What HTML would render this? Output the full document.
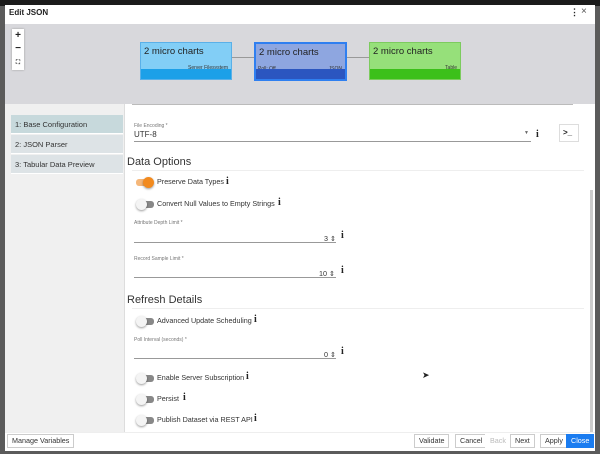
<!DOCTYPE html>
<html><head><style>
*{box-sizing:border-box;margin:0;padding:0}
body{width:600px;height:454px;background:#5b5b5b;font-family:"Liberation Sans",sans-serif;position:relative;overflow:hidden;color:#222}
.abs{position:absolute}
.top{left:0;top:0;width:600px;height:6px;background:#1b1b1b}
.dlg{left:5px;top:5px;width:590px;height:446px;background:#fff}
.node{position:absolute;border:1px solid;width:92px;height:38px}
.node .t{position:absolute;left:3px;top:3px;font-size:9.5px;color:#222}
.node .s{position:absolute;right:3px;top:22px;font-size:5px;color:#333}
.node .b{position:absolute;left:0;right:0;bottom:0;height:10px}
.nav div{position:absolute;left:11px;width:112px;height:19px;font-size:7.5px;padding:5px 4px;color:#333;background:#dde3e6;border-bottom:1px solid #fff}
.lbl{font-size:5px;color:#777}
.tog{position:absolute;width:15px;height:7px;border-radius:3px;background:#888}
.tog:after{content:"";position:absolute;left:-3px;top:-2px;width:11px;height:11px;border-radius:50%;background:#f4f4f4;box-shadow:0 1px 2px rgba(0,0,0,.4)}
.tog.on{background:#f5b77a}.tog.on:after{left:7px;background:#f28a1e}
.tx{position:absolute;font-size:7.2px;color:#333}
.i{position:absolute;font-family:"Liberation Serif",serif;font-weight:bold;font-size:10px;color:#222}
.line{position:absolute;height:1px;background:#999}
.btn{position:absolute;top:434px;height:14px;border:1px solid #ccc;font-size:7.2px;line-height:12px;padding:0 4px;color:#333;background:#fff}
h3{position:absolute;font-weight:normal;font-size:11px;color:#333}
</style></head><body>
<div class="abs top"></div>
<div class="abs dlg"></div>
<div class="abs" style="left:9px;top:8px;font-size:8px;font-weight:bold">Edit JSON</div>
<div class="abs" style="left:570px;top:7px;font-size:9px;font-weight:bold">⋮</div>
<div class="abs" style="left:581px;top:6px;font-size:10px;color:#555">×</div>
<div class="abs" style="left:5px;top:24px;width:590px;height:80px;background:#d8d8dc"></div>
<div class="abs" style="left:12px;top:29px;width:12px;height:41px;background:#fff;box-shadow:0 0 2px #999;font-size:10px;font-weight:bold;text-align:center;line-height:13px">+<br>−<br><span style="font-size:6px">⛶</span></div>
<div class="abs" style="left:232px;top:57px;width:22px;height:1px;background:#999"></div>
<div class="abs" style="left:347px;top:57px;width:22px;height:1px;background:#999"></div>
<div class="node" style="left:140px;top:42px;background:#82cef6;border-color:#5ab0e8"><div class="t">2 micro charts</div><div class="s">Server Filesystem</div><div class="b" style="background:#1ca0e8"></div></div>
<div class="node" style="left:254px;top:42px;width:93px;height:39px;background:#8ea6e0;border:2px solid #2f7ff0"><div class="t">2 micro charts</div><div class="s" style="left:2px;right:auto">Poll: Off</div><div class="s">JSON</div><div class="b" style="background:#2b56c0"></div></div>
<div class="node" style="left:369px;top:42px;background:#96e07a;border-color:#7ccb5e"><div class="t">2 micro charts</div><div class="s">Table</div><div class="b" style="background:#3cc01a"></div></div>
<div class="abs" style="left:5px;top:104px;width:119px;height:328px;background:#f0f0f0"></div>
<div class="abs" style="left:124px;top:104px;width:1px;height:328px;background:#ddd"></div>
<div class="abs" style="left:132px;top:104px;width:441px;height:1px;background:#bbb"></div>
<div class="nav"><div style="top:115px;background:#c7d9dc">1: Base Configuration</div><div style="top:135px">2: JSON Parser</div><div style="top:155px">3: Tabular Data Preview</div></div>
<div class="abs" style="left:590px;top:190px;width:3px;height:242px;background:#ccc"></div>
<div class="abs lbl" style="left:134px;top:123px">File Encoding *</div>
<div class="tx" style="left:134px;top:130px;font-size:8px">UTF-8</div>
<div class="abs" style="left:524px;top:130px;font-size:5px;color:#666">▼</div>
<div class="line" style="left:134px;top:141px;width:397px"></div>
<div class="i" style="left:536px;top:129px">i</div>
<div class="abs" style="left:559px;top:124px;width:20px;height:18px;border:1px solid #ddd;font-size:8px;font-weight:bold;padding:3px 3px">&gt;_</div>
<h3 style="left:127px;top:156px">Data Options</h3>
<div class="abs" style="left:132px;top:170px;width:452px;height:1px;background:#eee"></div>
<div class="tog on" style="left:136px;top:179px"></div><div class="tx" style="left:157px;top:177px">Preserve Data Types</div><div class="i" style="left:226px;top:176px">i</div>
<div class="tog" style="left:139px;top:201px"></div><div class="tx" style="left:157px;top:199px">Convert Null Values to Empty Strings</div><div class="i" style="left:278px;top:197px">i</div>
<div class="abs lbl" style="left:134px;top:220px">Attribute Depth Limit *</div>
<div class="tx" style="left:324px;top:234px">3 ⇕</div><div class="line" style="left:134px;top:242px;width:202px"></div><div class="i" style="left:341px;top:230px">i</div>
<div class="abs lbl" style="left:134px;top:256px">Record Sample Limit *</div>
<div class="tx" style="left:319px;top:269px">10 ⇕</div><div class="line" style="left:134px;top:277px;width:202px"></div><div class="i" style="left:341px;top:265px">i</div>
<h3 style="left:127px;top:294px">Refresh Details</h3>
<div class="abs" style="left:132px;top:308px;width:452px;height:1px;background:#eee"></div>
<div class="tog" style="left:139px;top:318px"></div><div class="tx" style="left:157px;top:316px">Advanced Update Scheduling</div><div class="i" style="left:254px;top:314px">i</div>
<div class="abs lbl" style="left:134px;top:337px">Poll Interval (seconds) *</div>
<div class="tx" style="left:324px;top:350px">0 ⇕</div><div class="line" style="left:134px;top:358px;width:202px"></div><div class="i" style="left:341px;top:346px">i</div>
<div class="tog" style="left:139px;top:375px"></div><div class="tx" style="left:157px;top:373px">Enable Server Subscription</div><div class="i" style="left:246px;top:371px">i</div>
<div class="tog" style="left:139px;top:396px"></div><div class="tx" style="left:157px;top:394px">Persist</div><div class="i" style="left:183px;top:392px">i</div>
<div class="tog" style="left:139px;top:417px"></div><div class="tx" style="left:157px;top:415px">Publish Dataset via REST API</div><div class="i" style="left:254px;top:413px">i</div>
<div class="abs" style="left:422px;top:370px;font-size:9px">➤</div>
<div class="abs" style="left:5px;top:432px;width:590px;height:1px;background:#eee"></div>
<div class="btn" style="left:7px">Manage Variables</div>
<div class="btn" style="left:414px">Validate</div>
<div class="btn" style="left:455px">Cancel</div>
<div class="btn" style="left:485px;border-color:#fff;color:#bbb">Back</div>
<div class="btn" style="left:510px">Next</div>
<div class="btn" style="left:540px">Apply</div>
<div class="btn" style="left:566px;background:#1a7cf0;border-color:#1a7cf0;color:#fff">Close</div>
</body></html>
